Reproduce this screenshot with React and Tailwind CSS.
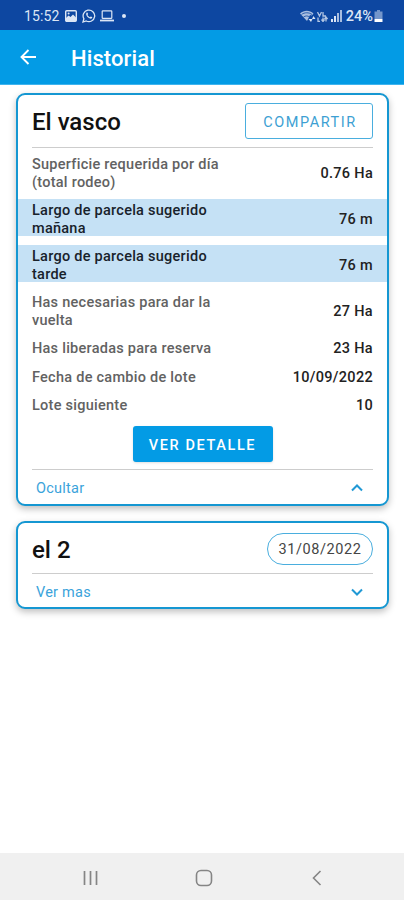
const rows = [
  { label: "Superficie requerida por día (total rodeo)", value: "0.76 Ha" },
  { label: "Largo de parcela sugerido mañana", value: "76 m", active: true },
  { label: "Largo de parcela sugerido tarde", value: "76 m", active: true },
  { label: "Has necesarias para dar la vuelta", value: "27 Ha" },
  { label: "Has liberadas para reserva", value: "23 Ha" },
  { label: "Fecha de cambio de lote", value: "10/09/2022" },
  { label: "Lote siguiente", value: "10" },
];

export default function App() {
  return (
    <div className="w-full h-screen flex flex-col bg-white overflow-hidden font-['Roboto',sans-serif]">
      <StatusBar />
      <Header title="Historial" />
      <div className="flex-1 flex flex-col px-4 pt-2 gap-[15px]">
        <Card className="h-[413px]">
          <div className="h-[53px] shrink-0 pt-2 mx-3.5 flex justify-between border-b border-[#cdcdcd]">
            <Title className="-mt-px">El vasco</Title>
            <button className="w-[128px] h-9 rounded-[3px] border border-[#4aaede] text-[#3d9fd3] text-[14.5px] tracking-[1.55px] pl-0.5 pt-[3px]">
              COMPARTIR
            </button>
          </div>
          <div className="pt-[5px] flex flex-col gap-[9px]">
            {rows.map(row => <Row key={row.label} {...row} />)}
          </div>
          <button className="mt-[12.5px] mx-auto w-[140px] h-9 shrink-0 rounded-[3px] bg-[#039be5] text-white text-[14.5px] font-medium tracking-[1.6px] pt-[3px] shadow-sm">
            VER DETALLE
          </button>
          <Toggle label="Ocultar" open className="mt-[7px]" />
        </Card>
        <Card className="h-[88px]">
          <div className="h-[51px] mx-3.5 pt-[10px] flex justify-between">
            <Title className="-mt-[3px]">el 2</Title>
            <div className="w-[106px] h-8 rounded-full border border-[#4aaede] flex items-center justify-center text-[14.5px] tracking-[0.6px] pt-px text-[#454545]">
              31/08/2022
            </div>
          </div>
          <Toggle label="Ver mas" />
        </Card>
      </div>
      <NavBar />
    </div>
  )
}

const Card = (props) => (
  <div className={"w-[373px] shrink-0 flex flex-col rounded-[9px] border-2 border-[#1597d2] bg-white shadow-[0_3px_7px_rgba(0,0,0,0.25)] " + props.className}>
    {props.children}
  </div>
)

const Title = (props) => (
  <div className={"h-9 flex items-center pt-1 text-[24px] font-medium text-[#111] " + (props.className || "")}>
    {props.children}
  </div>
)

const Row = ({ label, value, active }) => (
  <div className={"flex items-center justify-between px-3.5 pt-[2px] text-[14.5px] leading-[17.5px] font-medium " + (active ? "bg-[#c5e1f5] text-[#18222b]" : "text-[#626262]")}>
    <div className="w-[200px] pt-px -mb-px tracking-[0.26px]">{label}</div>
    <div className="pt-px -mb-px tracking-[0.3px] text-[#222]">{value}</div>
  </div>
)

const Toggle = ({ label, open, className }) => (
  <div className={"mx-3.5 h-[34px] shrink-0 border-t border-[#cdcdcd] flex items-center justify-between pl-1 pr-[9px] text-[14.5px] tracking-[0.25px] text-[#3aa3db] " + (className || "")}>
    <div className="pt-[4px]">{label}</div>
    <svg width="14" height="10" viewBox="0 0 14 10" fill="none" stroke="#2199d5" strokeWidth="2" className="mt-[3px]">
      <path d={open ? "M2 7.5 7 2.5l5 5" : "m2 2.5 5 5 5-5"} />
    </svg>
  </div>
)

const Header = ({ title }) => (
  <div className="h-[55px] shrink-0 flex items-center bg-[#039be5] pl-5 text-white border-b border-[#3fb4ee]">
    <svg width="17" height="16" viewBox="0 0 17 16" fill="none" stroke="currentColor" strokeWidth="1.9">
      <path d="M16 8H2M8.5 1 1.5 8l7 7" />
    </svg>
    <div className="ml-[34px] pt-0.5 text-[22px] font-medium tracking-[0.1px]">{title}</div>
  </div>
)

const StatusBar = () => (
  <div className="h-[30px] shrink-0 flex items-center justify-between bg-[#0d47a1] pl-6 pr-[21px] pt-0.5 text-[#dce6f5]">
    <div className="flex items-center">
      <span className="text-[14px] tracking-[0.1px]">15:52</span>
      <svg className="ml-[6px]" width="12" height="12" viewBox="0 0 12 12">
        <rect x=".7" y=".7" width="10.6" height="10.6" rx="1" fill="none" stroke="currentColor" strokeWidth="1.4" />
        <path d="M1 10V8l2.5-2.5L5.5 7 8 4.5l3 3V11H1z" fill="currentColor" />
        <circle cx="3.6" cy="3.5" r="1" fill="currentColor" />
      </svg>
      <svg className="ml-[5px]" width="14" height="14" viewBox="0 0 14 14">
        <path d="m1 13 .9-3.2A5.8 5.8 0 1 1 4.2 12z" fill="none" stroke="currentColor" strokeWidth="1.3" />
        <path d="M4.4 4c.5-.6 1-.5 1.2 0l.5 1.1-.6.9c.6 1.1 1.3 1.7 2.4 2.2l.8-.8 1.4.7c.4.3.1 1-.5 1.4C7.5 10.5 3 6.5 4.4 4z" fill="currentColor" />
      </svg>
      <svg className="ml-[4px]" width="14" height="12" viewBox="0 0 14 12" fill="none" stroke="currentColor">
        <rect x="2.2" y=".8" width="9.6" height="7.6" rx=".7" strokeWidth="1.2" />
        <path d="M0 10.5h14" strokeWidth="1.8" />
      </svg>
      <span className="ml-[8px] size-1 rounded-full bg-current" />
    </div>
    <div className="flex items-center">
      <svg width="16" height="13" viewBox="0 0 16 13" fill="currentColor">
        <path d="M0 3.5C4-.3 9.5-.3 13.5 3.5L11.8 5.5 10 5 7 11z" opacity=".75" />
        <path d="M1.5 4.5c3-2.3 7.5-2.3 10.5 0M3.5 7c2-1.4 4.3-1.4 6 0" stroke="#0d47a1" strokeWidth=".8" fill="none" />
        <path d="m8.5 9 2.5 3 1.5-3zM12 9l1.5-3 2 3z" />
      </svg>
      <svg className="ml-[1px]" width="11" height="11" viewBox="0 0 11 11" fill="none" stroke="currentColor" strokeWidth="1.3" opacity=".8">
        <path d="m.5 1 2 4 2-4M6 1v4h3M1 6.5v4h2M6 10.5v-4M4.5 8.5 6 10.5l1.5-2M9 6v4.5M7.5 8 9 6l1.5 2" />
      </svg>
      <svg className="ml-[3px]" width="11" height="12" viewBox="0 0 11 12" fill="currentColor">
        <path d="M0 9h2v3H0zM3 6h2v6H3z" />
        <path d="M6 3h2v9H6zM9 0h2v12H9z" opacity=".75" />
      </svg>
      <span className="ml-[4px] pt-px text-[14.5px] leading-4 font-medium">24%</span>
      <svg className="ml-px" width="9" height="12" viewBox="0 0 9 12" fill="currentColor">
        <path d="M3 0h3v1.5h2.5V9h-8V1.5H3z" opacity=".5" />
        <path d="M.5 9h8v3h-8z" fill="#fff" />
      </svg>
    </div>
  </div>
)

const NavBar = () => (
  <div className="h-[47px] shrink-0 bg-[#f0f0f0] flex items-center pl-[82px] pt-[3px] text-[#858585]">
    <svg width="17" height="16" viewBox="0 0 17 16" stroke="currentColor" strokeWidth="1.7">
      <path d="M2.5 1v14M8.5 1v14M14.5 1v14" />
    </svg>
    <svg className="ml-[96px]" width="18" height="18" viewBox="0 0 18 18" fill="none" stroke="currentColor" strokeWidth="1.6">
      <rect x="1.5" y="1.5" width="15" height="15" rx="4.5" />
    </svg>
    <svg className="ml-[99px]" width="10" height="16" viewBox="0 0 10 16" fill="none" stroke="currentColor" strokeWidth="1.6">
      <path d="M8.5 1 1.5 8l7 7" />
    </svg>
  </div>
)
